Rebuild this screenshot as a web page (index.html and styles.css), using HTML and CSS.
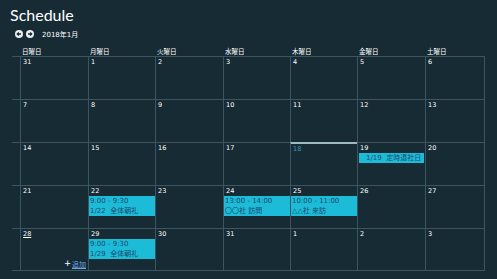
FILE: index.html
```html
<!DOCTYPE html>
<html lang="ja">
<head>
<meta charset="utf-8">
<title>Schedule</title>
<link rel="stylesheet" href="styles.css">
</head>
<body>
<div class="app">
  <h1 class="title">Schedule</h1>
  <div class="nav">
    <button class="nav-btn" aria-label="前月"><svg viewBox="0 0 8 8" width="8" height="8"><circle cx="4" cy="4" r="4" fill="#e9eef0"/><path d="M6 4H2.3M3.8 2.5L2.3 4L3.8 5.5" stroke="#172b35" stroke-width="1.3" fill="none"/></svg></button>
    <button class="nav-btn" aria-label="翌月"><svg viewBox="0 0 8 8" width="8" height="8"><circle cx="4" cy="4" r="4" fill="#e9eef0"/><path d="M2 4H5.7M4.2 2.5L5.7 4L4.2 5.5" stroke="#172b35" stroke-width="1.3" fill="none"/></svg></button>
    <span class="month">2018年1月</span>
  </div>
  <div class="cal">
    <div class="gut head"></div>
    <div class="dow">日曜日</div><div class="dow">月曜日</div><div class="dow">火曜日</div><div class="dow">水曜日</div><div class="dow">木曜日</div><div class="dow">金曜日</div><div class="dow">土曜日</div>

    <div class="gut"></div>
    <div class="cell"><span class="date">31</span></div>
    <div class="cell"><span class="date">1</span></div>
    <div class="cell"><span class="date">2</span></div>
    <div class="cell"><span class="date">3</span></div>
    <div class="cell"><span class="date">4</span></div>
    <div class="cell"><span class="date">5</span></div>
    <div class="cell last"><span class="date">6</span></div>

    <div class="gut"></div>
    <div class="cell"><span class="date">7</span></div>
    <div class="cell"><span class="date">8</span></div>
    <div class="cell"><span class="date">9</span></div>
    <div class="cell"><span class="date">10</span></div>
    <div class="cell"><span class="date">11</span></div>
    <div class="cell"><span class="date">12</span></div>
    <div class="cell last"><span class="date">13</span></div>

    <div class="gut"></div>
    <div class="cell"><span class="date">14</span></div>
    <div class="cell"><span class="date">15</span></div>
    <div class="cell"><span class="date">16</span></div>
    <div class="cell"><span class="date">17</span></div>
    <div class="cell today"><span class="date">18</span></div>
    <div class="cell"><span class="date">19</span><div class="event single">1/19&nbsp; 定時退社日</div></div>
    <div class="cell last"><span class="date">20</span></div>

    <div class="gut"></div>
    <div class="cell"><span class="date">21</span></div>
    <div class="cell"><span class="date">22</span><div class="event"><div>9:00 - 9:30</div><div>1/22&nbsp; 全体朝礼</div></div></div>
    <div class="cell"><span class="date">23</span></div>
    <div class="cell"><span class="date">24</span><div class="event"><div>13:00 - 14:00</div><div>〇〇社 訪問</div></div></div>
    <div class="cell"><span class="date">25</span><div class="event"><div>10:00 - 11:00</div><div>△△社 来訪</div></div></div>
    <div class="cell"><span class="date">26</span></div>
    <div class="cell last"><span class="date">27</span></div>

    <div class="gut end"></div>
    <div class="cell end"><span class="date focus">28</span><a class="add" href="#"><span class="plus">+</span><span class="add-text">追加</span></a></div>
    <div class="cell end"><span class="date">29</span><div class="event"><div>9:00 - 9:30</div><div>1/29&nbsp; 全体朝礼</div></div></div>
    <div class="cell end"><span class="date">30</span></div>
    <div class="cell end"><span class="date">31</span></div>
    <div class="cell end"><span class="date">1</span></div>
    <div class="cell end"><span class="date">2</span></div>
    <div class="cell end last"><span class="date">3</span></div>
  </div>
</div>
</body>
</html>
```

FILE: styles.css
```css
html, body {
  margin: 0;
  padding: 0;
  background: #172b35;
}

.app {
  width: 497px;
  height: 279px;
  background: #172b35;
  color: #ffffff;
  font-family: "DejaVu Sans", "Noto Sans CJK JP", sans-serif;
  overflow: hidden;
}

.title {
  margin: 0;
  padding: 5px 0 0 10px;
  font-family: Lato, "Noto Sans", sans-serif;
  font-weight: 400;
  font-size: 16px;
  line-height: 20px;
  color: #ffffff;
}

.nav {
  display: flex;
  align-items: center;
  height: 12px;
  margin-top: 3px;
  padding-left: 15px;
}

.nav-btn {
  display: block;
  width: 8px;
  height: 8px;
  padding: 0;
  margin: 0 3px 0 0;
  border: 0;
  background: none;
}

.nav-btn svg {
  display: block;
}

.month {
  margin-left: 5px;
  font-family: "DejaVu Sans", "Noto Sans CJK JP", sans-serif;
  font-size: 7px;
  color: #ffffff;
}

.cal {
  display: grid;
  grid-template-columns: 8px 68px 67px 68px 67px 67px 68px 60px;
  grid-template-rows: 10px repeat(5, 43px);
  margin: 6px 0 0 12px;
  width: 473px;
}

.dow {
  font-family: "Noto Sans CJK JP", sans-serif;
  font-size: 6.5px;
  line-height: 10px;
  padding-left: 2px;
  color: #ffffff;
}

.gut {
  box-sizing: border-box;
  border-top: 1px solid #3d555f;
}

.gut.head {
  border-top: 0;
}

.cell {
  box-sizing: border-box;
  border-top: 1px solid #3d555f;
  border-left: 1px solid #3d555f;
  display: flex;
  flex-direction: column;
  min-width: 0;
}

.cell.last {
  border-right: 1px solid #3d555f;
}

.end {
  border-bottom: 1px solid #3d555f;
}

.cell.today {
  border-top: 2px solid #9dbac4;
}

.date {
  display: block;
  height: 10px;
  padding: 1px 0 0 2px;
  box-sizing: border-box;
  font-size: 6.5px;
  line-height: 9px;
  color: #ffffff;
}

.today .date {
  height: 9px;
  color: #3a9cb8;
}

.date.focus {
  text-decoration: underline;
}

.event {
  background: #1cbcd9;
  color: #1c486a;
  font-size: 7px;
  line-height: 10px;
  padding-left: 1px;
  white-space: nowrap;
  overflow: hidden;
}

.event.single {
  height: 10px;
  line-height: 10px;
  margin: 0 1px 0 1px;
  padding-left: 7px;
}

.add {
  margin-top: auto;
  align-self: flex-end;
  margin-right: 2px;
  margin-bottom: 2px;
  display: flex;
  align-items: center;
  text-decoration: none;
  font-size: 7px;
  line-height: 8px;
}

.plus {
  color: #d8e4ea;
  font-weight: bold;
  font-size: 8px;
  margin-right: 1px;
}

.add-text {
  color: #6aa6e2;
  text-decoration: underline;
  font-family: "Noto Sans CJK JP", sans-serif;
}
```
